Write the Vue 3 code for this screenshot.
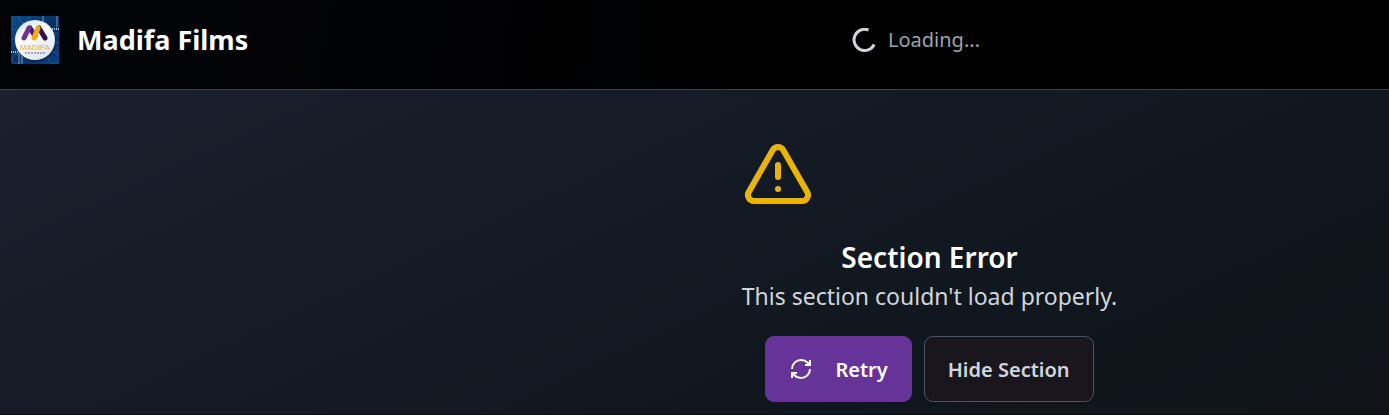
<script setup>
import { ref } from 'vue'

const visible = ref(true)
const attempts = ref(0)
</script>

<template>
  <div class="page">
    <header class="topbar">
      <div class="brand">
        <svg class="logo" viewBox="0 0 48 48" role="img" aria-label="Madifa logo">
          <defs>
            <linearGradient id="sky" x1="0" y1="0" x2="1" y2="1">
              <stop offset="0" stop-color="#0d4f8c" />
              <stop offset="0.5" stop-color="#0a3060" />
              <stop offset="1" stop-color="#0a4080" />
            </linearGradient>
            <linearGradient id="disc" x1="0" y1="0" x2="0.6" y2="1">
              <stop offset="0" stop-color="#c3d3e8" />
              <stop offset="0.4" stop-color="#ffffff" />
              <stop offset="1" stop-color="#dde7f3" />
            </linearGradient>
          </defs>
          <rect width="48" height="48" fill="url(#sky)" />
          <g fill="none" stroke="#1f5c98" stroke-width="1">
            <circle cx="2" cy="18" r="5" />
            <circle cx="45" cy="22" r="5" />
            <circle cx="13" cy="2" r="5" />
            <circle cx="43" cy="42" r="6" />
            <circle cx="6" cy="43" r="5" />
          </g>
          <path d="M32 0V6M46 0V11M8 37V48M11 39V48" stroke="#6d9dca" stroke-width="1" />
          <path d="M39 13H48M0 36H9" stroke="#a9c8e6" stroke-width="2" stroke-dasharray="1 1" />
          <circle cx="25" cy="26" r="20" fill="#061f43" opacity="0.6" />
          <circle cx="24" cy="24" r="20" fill="url(#disc)" />
          <g fill="none" stroke-width="5" stroke-linecap="round">
            <path d="M19 12L24 20" stroke="#4b176b" />
            <path d="M18 12L13 22" stroke="#74308d" />
            <path d="M28 12L34 22" stroke="#301246" />
            <path d="M27 12L23 22" stroke="#faa70a" />
          </g>
          <text class="logo-name" x="24" y="34" text-anchor="middle">MADIFA</text>
          <path d="M14 37H35" stroke="#5c5965" stroke-width="1" stroke-dasharray="2 1" />
        </svg>
        <span class="name">Madifa Films</span>
      </div>
      <div class="loading" role="status">
        <svg class="spinner" viewBox="0 0 24 24" aria-hidden="true">
          <path d="M16.5 2A10.6 10.6 0 1 0 22.2 16.5" />
        </svg>
        <span>Loading...</span>
      </div>
    </header>

    <main class="content">
      <section v-if="visible" :key="attempts" class="error">
        <svg class="warning" viewBox="0 0 24 24" aria-hidden="true">
          <path d="m21.73 18-8-14a2 2 0 0 0-3.48 0l-8 14A2 2 0 0 0 4 21h16a2 2 0 0 0 1.73-3" />
          <path d="M12 9v4" />
          <path d="M12 17h.01" />
        </svg>
        <h2>Section Error</h2>
        <p>This section couldn't load properly.</p>
        <div class="actions">
          <button type="button" class="retry" @click="attempts++">
            <svg viewBox="0 0 24 24" aria-hidden="true">
              <path d="M3 12a9 9 0 0 1 9-9 9.75 9.75 0 0 1 6.74 2.74L21 8" />
              <path d="M21 3v5h-5" />
              <path d="M21 12a9 9 0 0 1-9 9 9.75 9.75 0 0 1-6.74-2.74L3 16" />
              <path d="M8 16H3v5" />
            </svg>
            <span>Retry</span>
          </button>
          <button type="button" class="hide" @click="visible = false">Hide Section</button>
        </div>
      </section>
    </main>
  </div>
</template>

<style>
body {
  margin: 0;
  background: #0b0d14;
}
</style>

<style scoped>
.page {
  --lead: 470px;
  font-family: "Segoe UI", "Noto Sans", "Open Sans", sans-serif;
  color: #fff;
}

.topbar {
  box-sizing: border-box;
  display: flex;
  align-items: center;
  min-height: 90px;
  padding: 0 0 9px 11px;
  border-bottom: 1px solid #374151;
  background: linear-gradient(100deg, #030408, #000 60%);
}

.brand {
  display: flex;
  flex: 0 0 432px;
  align-items: center;
  gap: 18px;
}

.logo {
  width: 48px;
  height: 48px;
}

.logo-name {
  fill: #f2ac3c;
  font-family: "Liberation Sans", sans-serif;
  font-size: 8px;
}

.name {
  font-size: 27px;
  font-weight: 700;
  line-height: 40px;
}

.loading {
  display: flex;
  flex: 1;
  align-items: center;
  justify-content: center;
  gap: 12px;
  color: #9ca3af;
  font-size: 20px;
  line-height: 32px;
}

.spinner {
  width: 24px;
  height: 24px;
  fill: none;
  stroke: #d1d5db;
  stroke-width: 3;
}

.content {
  display: flex;
  justify-content: center;
  padding: 48px 0 12px var(--lead);
  background: linear-gradient(155deg, #1a202e, #111820 60%, #10131a);
}

.error {
  text-align: center;
}

.warning {
  display: block;
  width: 72px;
  height: 72px;
  margin-bottom: 28px;
  fill: none;
  stroke: #eab308;
  stroke-width: 2;
  stroke-linecap: round;
  stroke-linejoin: round;
}

h2 {
  margin: 0;
  font-size: 28px;
  font-weight: 600;
  line-height: 38px;
}

p {
  margin: 0 0 20px;
  color: #d1d5db;
  font-size: 23px;
  line-height: 40px;
}

.actions {
  display: flex;
  justify-content: center;
  gap: 12px;
}

button {
  display: flex;
  align-items: center;
  box-sizing: border-box;
  min-height: 66px;
  padding: 0 23px;
  border: 1px solid transparent;
  border-radius: 9px;
  font-family: inherit;
  font-size: 20px;
  font-weight: 600;
  cursor: pointer;
}

.retry {
  gap: 22px;
  background: #663399;
  border-color: #663399;
  color: #fff;
}

.retry svg {
  width: 24px;
  height: 24px;
  fill: none;
  stroke: currentColor;
  stroke-width: 2;
}

.hide {
  background: #1a161d;
  border-color: #4b5563;
  color: #d1d5db;
}
</style>
